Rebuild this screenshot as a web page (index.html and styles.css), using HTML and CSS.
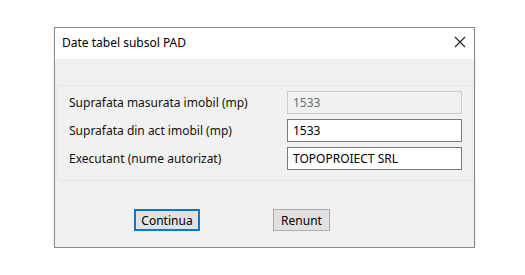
FILE: index.html
```html
<!DOCTYPE html>
<html>
<head>
<meta charset="utf-8">
<link rel="stylesheet" href="styles.css">
</head>
<body>
<div class="stage">
  <div class="window">
    <div class="titlebar">
      <span class="title">Date tabel subsol PAD</span>
      <span class="close">
        <svg width="12" height="12" viewBox="0 0 12 12"><path d="M1 1 L11 11 M11 1 L1 11" stroke="#222" stroke-width="1.1" fill="none"/></svg>
      </span>
    </div>
    <div class="body">
      <div class="group">
        <div class="row">
          <span class="label">Suprafata masurata imobil (mp)</span>
          <span class="field disabled">1533</span>
        </div>
        <div class="row">
          <span class="label">Suprafata din act imobil (mp)</span>
          <span class="field">1533</span>
        </div>
        <div class="row">
          <span class="label">Executant (nume autorizat)</span>
          <span class="field">TOPOPROIECT SRL</span>
        </div>
      </div>
      <div class="buttons">
        <span class="btn default">Continua</span>
        <span class="btn renunt">Renunt</span>
      </div>
    </div>
  </div>
</div>
</body>
</html>
```
FILE: styles.css
```css
html, body {
  margin: 0;
  padding: 0;
  background: #ffffff;
}
body {
  font-family: "Noto Sans", "Open Sans", "Liberation Sans", sans-serif;
  font-size: 12px;
  color: #000;
}
.stage {
  padding: 27px 0 0 54px;
}
.window {
  width: 419px;
  height: 219px;
  border: 1px solid #8a8a8a;
  display: flex;
  flex-direction: column;
  box-shadow: 0 1px 2px rgba(0,0,0,0.15);
}
.titlebar {
  height: 31px;
  background: #fff;
  display: flex;
  align-items: center;
  justify-content: space-between;
  padding: 0 7px 0 7px;
}
.title {
  font-size: 12px;
  line-height: 16px;
  margin-top: -2px;
}
.close {
  display: flex;
  width: 12px;
  height: 12px;
  margin-top: -3px;
  margin-right: 1px;
}
.body {
  flex: 1;
  background: #f0f0f0;
  display: flex;
  flex-direction: column;
  padding-top: 26px;
}
.group {
  margin: 0 1px 0 2px;
  height: 89px;
  border: 1px solid #e6e6e6;
  background: #f1f1f1;
  padding: 5px 10px 0 10px;
  display: flex;
  flex-direction: column;
  gap: 5px;
}
.row {
  display: flex;
  align-items: center;
  justify-content: space-between;
  height: 23px;
}
.label {
  padding-left: 1px;
  font-size: 12px;
  color: #111;
}
.field {
  box-sizing: border-box;
  width: 175px;
  height: 23px;
  border: 1px solid #7a7a7a;
  background: #fff;
  padding: 0 5px;
  display: flex;
  align-items: center;
  font-size: 12px;
}
.field.disabled {
  background: #f0f0f0;
  border-color: #cccccc;
  color: #6d6d6d;
}
.buttons {
  display: flex;
  padding: 28px 0 0 79px;
  gap: 73px;
}
.btn {
  box-sizing: border-box;
  height: 22px;
  display: flex;
  align-items: center;
  justify-content: center;
  background: #e1e1e1;
  border: 1px solid #adadad;
  font-size: 12px;
}
.btn.default {
  width: 66px;
  border: 2px solid #0078d7;
}
.btn.renunt {
  width: 57px;
}
```
